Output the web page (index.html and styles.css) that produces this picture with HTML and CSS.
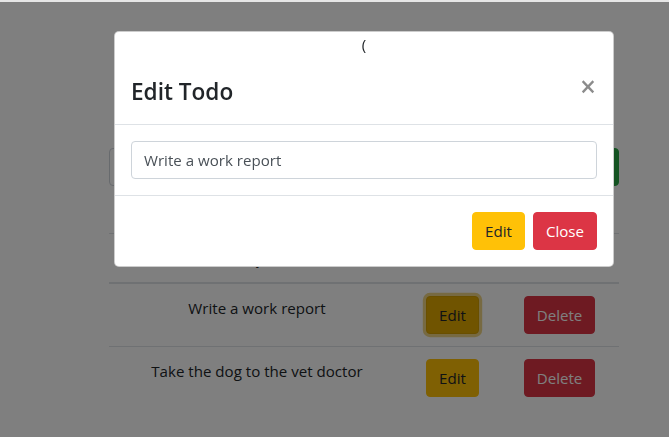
FILE: index.html
```html
<!DOCTYPE html>
<html lang="en">
<head>
<meta charset="utf-8">
<title>Todo App</title>
<link rel="stylesheet" href="styles.css">
</head>
<body>
<div class="topbar"></div>
<main class="page">
  <h1 class="page-title">Todo List</h1>
  <form class="input-group">
    <input class="form-control grow" type="text" value="">
    <button class="btn btn-success btn-append" type="button">Add</button>
  </form>
  <table class="table">
    <colgroup><col class="c1"><col class="c2"><col class="c3"></colgroup>
    <thead>
      <tr><th>Topic</th><th>Edit</th><th>Delete</th></tr>
    </thead>
    <tbody>
      <tr>
        <td>Write a work report</td>
        <td><button class="btn btn-warning is-focus" type="button">Edit</button></td>
        <td><button class="btn btn-danger" type="button">Delete</button></td>
      </tr>
      <tr>
        <td>Take the dog to the vet doctor</td>
        <td><button class="btn btn-warning" type="button">Edit</button></td>
        <td><button class="btn btn-danger" type="button">Delete</button></td>
      </tr>
    </tbody>
  </table>
</main>
<div class="backdrop"></div>
<div class="modal">
  <div class="modal-content">
    <div class="stray">(</div>
    <div class="modal-header">
      <h4 class="modal-title">Edit Todo</h4>
      <button class="close" type="button" aria-label="Close">×</button>
    </div>
    <div class="modal-body">
      <input class="form-control" type="text" value="Write a work report">
    </div>
    <div class="modal-footer">
      <button class="btn btn-warning" type="button">Edit</button>
      <button class="btn btn-danger" type="button">Close</button>
    </div>
  </div>
</div>
</body>
</html>
```
FILE: styles.css
```css
* { box-sizing: border-box; }
html, body { margin: 0; padding: 0; }
body {
  font-family: "Open Sans", "Noto Sans", sans-serif;
  font-size: 15.1px;
  line-height: 24px;
  color: #212529;
  background: #fff;
}
.topbar {
  position: fixed;
  top: 0; left: 0; right: 0;
  height: 2px;
  background: #e6e6e6;
  z-index: 30;
}
.page {
  width: 510px;
  margin-left: 109px;
}
.page-title {
  margin: 0;
  padding: 60px 0 40px;
  font-size: 40px;
  line-height: 48px;
  font-weight: 500;
  text-align: center;
}
.input-group {
  display: flex;
  margin: 0 0 47px;
}
.form-control {
  display: block;
  width: 100%;
  height: 38px;
  padding: 6px 12px;
  font-family: inherit;
  font-size: 15.1px;
  line-height: 24px;
  color: #495057;
  background: #fff;
  border: 1px solid #ced4da;
  border-radius: 4px;
  outline: none;
}
.grow { flex: 1; border-radius: 4px 0 0 4px; }
.btn {
  display: inline-block;
  padding: 6px 12px;
  font-family: inherit;
  font-size: 15.1px;
  line-height: 24px;
  border: 1px solid transparent;
  border-radius: 4px;
  cursor: pointer;
}
.btn-append { border-radius: 0 4px 4px 0; }
.btn-success { background: #28a745; border-color: #28a745; color: #fff; }
.btn-warning { background: #ffc107; border-color: #ffc107; color: #212529; }
.btn-danger { background: #dc3545; border-color: #dc3545; color: #fff; }
.btn-warning.is-focus {
  background: #e0a800;
  border-color: #d39e00;
  box-shadow: 0 0 0 3.2px rgba(222, 170, 12, 0.5);
}
.table {
  width: 100%;
  border-collapse: collapse;
  table-layout: fixed;
}
.c1 { width: 296px; }
.c2 { width: 95px; }
.c3 { width: 119px; }
.table th, .table td {
  padding: 12px;
  border-top: 1px solid #dee2e6;
  vertical-align: top;
  text-align: center;
}
.table thead th {
  border-bottom: 2px solid #dee2e6;
  font-weight: 700;
}
.backdrop {
  position: fixed;
  inset: 0;
  background: rgba(0, 0, 0, 0.5);
  z-index: 10;
}
.modal {
  position: fixed;
  top: 31px;
  left: 114px;
  width: 500px;
  z-index: 20;
}
.modal-content {
  background: #fff;
  border: 1px solid rgba(0, 0, 0, 0.2);
  border-radius: 5px;
}
.stray {
  text-align: center;
  line-height: 24px;
}
.modal-header {
  display: flex;
  align-items: flex-start;
  padding: 16px;
  border-bottom: 1px solid #dee2e6;
}
.modal-title {
  margin: 2px 0 -2px;
  font-size: 22.6px;
  line-height: 36px;
  font-weight: 600;
}
.close {
  margin: -16px -16px -16px auto;
  padding: 18px 17px 14px 16px;
  font-family: inherit;
  font-size: 28px;
  line-height: 24px;
  font-weight: 600;
  color: #000;
  opacity: 0.45;
  text-shadow: 0 1px 0 #fff;
  background: transparent;
  border: 0;
}
.modal-body {
  padding: 16px;
}
.modal-footer {
  display: flex;
  justify-content: flex-end;
  align-items: center;
  padding: 12px;
  border-top: 1px solid #dee2e6;
}
.modal-footer .btn { margin: 4px; }
```
